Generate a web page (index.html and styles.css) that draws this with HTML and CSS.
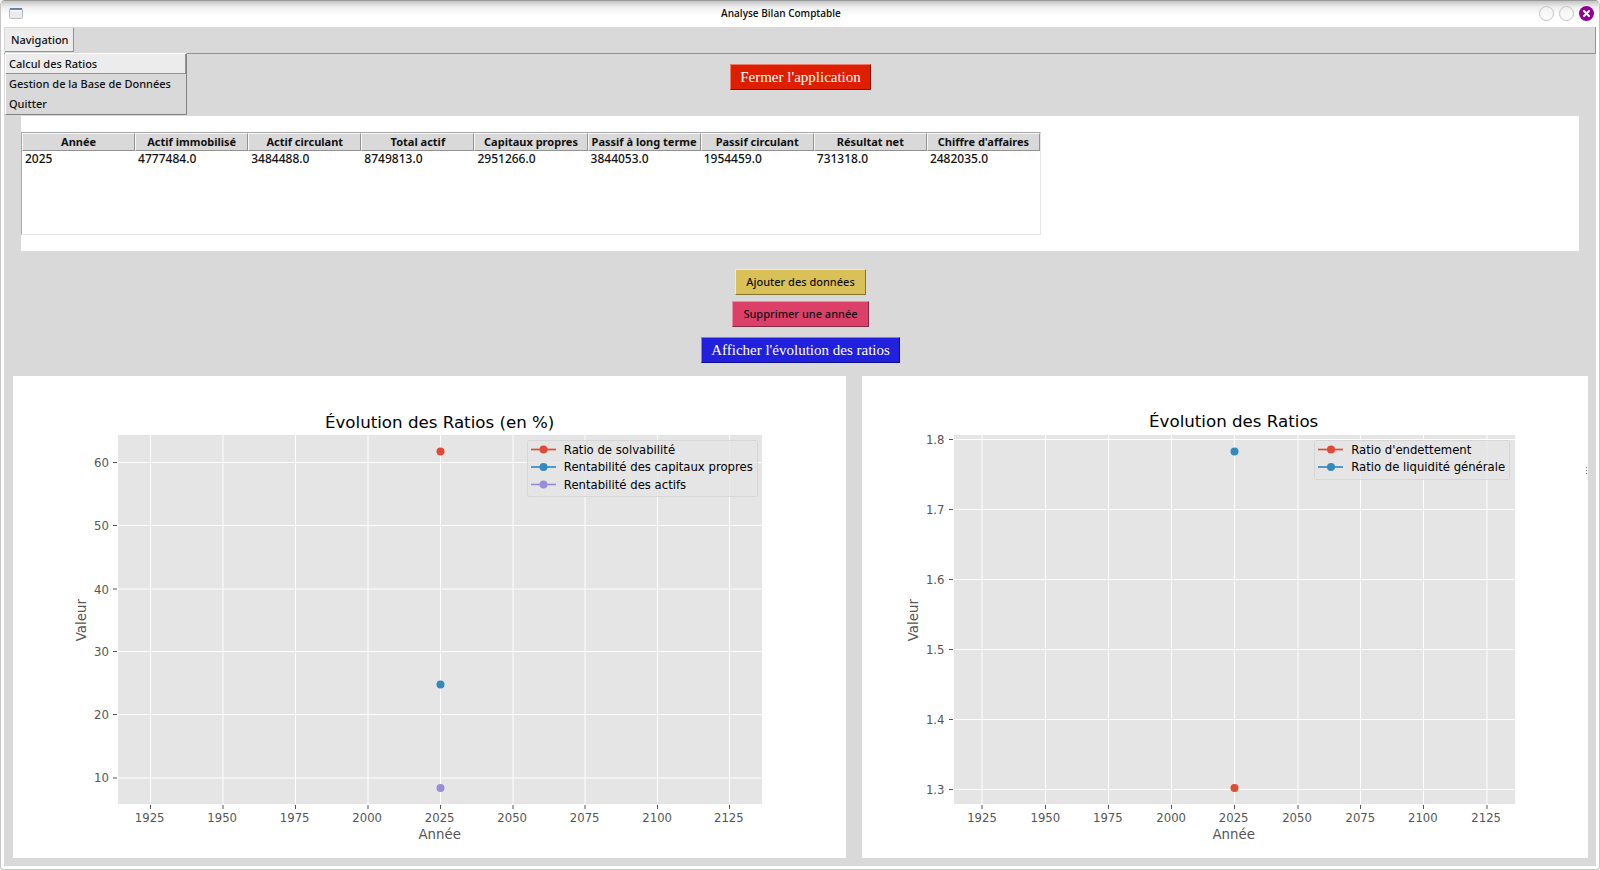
FILE: index.html
```html
<!DOCTYPE html>
<html lang="fr">
<head>
<meta charset="utf-8">
<title>Analyse Bilan Comptable</title>
<link rel="stylesheet" href="styles.css">
</head>
<body>
<div class="window">
  <header class="titlebar">
    <svg class="app-icon" viewBox="0 0 14 11" aria-hidden="true">
      <rect x=".5" y=".5" width="13" height="10" rx="1" fill="#e9ebee" stroke="#b9bdc4"/>
      <path d="M1 1h12" stroke="#5a6d90" stroke-width="1.6"/>
      <path d="M2 3h10" stroke="#fff"/>
    </svg>
    <h1 class="title">Analyse Bilan Comptable</h1>
    <div class="window-controls">
      <button class="control" type="button" aria-label="Réduire"></button>
      <button class="control" type="button" aria-label="Agrandir"></button>
      <button class="control control-close" type="button" aria-label="Fermer">
        <svg viewBox="0 0 15 15" aria-hidden="true"><path d="M5 5l5 5M10 5l-5 5" stroke="#fff" stroke-width="2" stroke-linecap="round"/></svg>
      </button>
    </div>
  </header>

  <div class="client">
    <nav class="menubar">
      <button class="menu-button" type="button" aria-expanded="true">Navigation</button>
      <div class="menu" role="menu">
        <button class="menu-item active" type="button" role="menuitem">Calcul des Ratios</button>
        <button class="menu-item" type="button" role="menuitem">Gestion de la Base de Données</button>
        <button class="menu-item" type="button" role="menuitem">Quitter</button>
      </div>
    </nav>

    <main class="content">
      <button class="btn btn-large btn-red" type="button">Fermer l'application</button>

      <section class="data-panel">
        <div class="table-frame">
          <table class="data">
            <thead>
              <tr><th>Année</th><th>Actif immobilisé</th><th>Actif circulant</th><th>Total actif</th><th>Capitaux propres</th><th>Passif à long terme</th><th>Passif circulant</th><th>Résultat net</th><th>Chiffre d'affaires</th></tr>
            </thead>
            <tbody>
              <tr><td>2025</td><td>4777484.0</td><td>3484488.0</td><td>8749813.0</td><td>2951266.0</td><td>3844053.0</td><td>1954459.0</td><td>731318.0</td><td>2482035.0</td></tr>
            </tbody>
          </table>
        </div>
      </section>

      <div class="actions">
        <button class="btn btn-yellow" type="button">Ajouter des données</button>
        <button class="btn btn-pink" type="button">Supprimer une année</button>
        <button class="btn btn-large btn-blue" type="button">Afficher l'évolution des ratios</button>
      </div>

      <section class="charts">
        <svg class="chart chart-percent" viewBox="0 0 999.6 578.4" role="img" aria-label="Évolution des Ratios (en %)">
          <rect class="plot" x="126" y="70.8" width="772.8" height="442.8"/>
          <path class="grid" d="M165 70.8v442.8M252 70.8v442.8M339 70.8v442.8M426 70.8v442.8M513 70.8v442.8M600 70.8v442.8M686.4 70.8v442.8M773.4 70.8v442.8M859.8 70.8v442.8M126 103.8h772.8M126 179.4h772.8M126 255.6h772.8M126 330.6h772.8M126 406.2h772.8M126 482.4h772.8"/>
          <path class="ticks" d="M165 514.8v4.8M252 514.8v4.8M339 514.8v4.8M426 514.8v4.8M513 514.8v4.8M600 514.8v4.8M686.4 514.8v4.8M773.4 514.8v4.8M859.8 514.8v4.8M120 103.8h4.8M120 179.4h4.8M120 255.6h4.8M120 330.6h4.8M120 406.2h4.8M120 482.4h4.8"/>
          <text class="chart-title" x="512" y="62">Évolution des Ratios (en %)</text>
          <g class="tick-y">
            <text x="115" y="109">60</text><text x="115" y="185">50</text><text x="115" y="261">40</text>
            <text x="115" y="336">30</text><text x="115" y="412">20</text><text x="115" y="487">10</text>
          </g>
          <g class="tick-x">
            <text x="164" y="535">1925</text><text x="251" y="535">1950</text><text x="338" y="535">1975</text>
            <text x="425" y="535">2000</text><text x="512" y="535">2025</text><text x="599" y="535">2050</text>
            <text x="686" y="535">2075</text><text x="773" y="535">2100</text><text x="859" y="535">2125</text>
          </g>
          <text class="axis-label" x="512" y="556">Année</text>
          <text class="axis-label" transform="translate(88 293) rotate(-90)">Valeur</text>
          <circle class="red" cx="513" cy="90.6" r="4.8"/>
          <circle class="blue" cx="513" cy="370.2" r="4.8"/>
          <circle class="purple" cx="513" cy="494.4" r="4.8"/>
          <rect class="legend-box" x="617.4" y="77.4" width="276" height="67.2" rx="2.4"/>
          <g class="red"><path d="M621.6 88.2h30"/><circle cx="636.6" cy="88.2" r="4.8"/></g>
          <g class="blue"><path d="M621.6 109.2h30"/><circle cx="636.6" cy="109.2" r="4.8"/></g>
          <g class="purple"><path d="M621.6 130.2h30"/><circle cx="636.6" cy="130.2" r="4.8"/></g>
          <g class="legend-text">
            <text x="661" y="94">Ratio de solvabilité</text>
            <text x="661" y="114">Rentabilité des capitaux propres</text>
            <text x="661" y="136">Rentabilité des actifs</text>
          </g>
        </svg>
        <svg class="chart chart-ratio" viewBox="0 0 871.2 578.4" role="img" aria-label="Évolution des Ratios">
          <rect class="plot" x="110.4" y="70.8" width="673.2" height="442.8"/>
          <path class="grid" d="M144 70.8v442.8M220.2 70.8v442.8M295.8 70.8v442.8M371.4 70.8v442.8M447 70.8v442.8M523.2 70.8v442.8M598.2 70.8v442.8M673.8 70.8v442.8M750 70.8v442.8M110.4 76.2h673.2M110.4 160.2h673.2M110.4 244.2h673.2M110.4 328.2h673.2M110.4 412.2h673.2M110.4 496.2h673.2"/>
          <path class="ticks" d="M144 514.8v4.8M220.2 514.8v4.8M295.8 514.8v4.8M371.4 514.8v4.8M447 514.8v4.8M523.2 514.8v4.8M598.2 514.8v4.8M673.8 514.8v4.8M750 514.8v4.8M104.4 76.2h4.8M104.4 160.2h4.8M104.4 244.2h4.8M104.4 328.2h4.8M104.4 412.2h4.8M104.4 496.2h4.8"/>
          <text class="chart-title" x="446" y="61">Évolution des Ratios</text>
          <g class="tick-y">
            <text x="99" y="82">1.8</text><text x="99" y="166">1.7</text><text x="99" y="250">1.6</text>
            <text x="99" y="334">1.5</text><text x="99" y="418">1.4</text><text x="99" y="502">1.3</text>
          </g>
          <g class="tick-x">
            <text x="144" y="535">1925</text><text x="220" y="535">1950</text><text x="295" y="535">1975</text>
            <text x="371" y="535">2000</text><text x="446" y="535">2025</text><text x="522" y="535">2050</text>
            <text x="598" y="535">2075</text><text x="673" y="535">2100</text><text x="749" y="535">2125</text>
          </g>
          <text class="axis-label" x="446" y="556">Année</text>
          <text class="axis-label" transform="translate(67 293) rotate(-90)">Valeur</text>
          <circle class="blue" cx="447" cy="90.6" r="4.8"/>
          <circle class="red" cx="447" cy="494.4" r="4.8"/>
          <rect class="legend-box" x="543" y="77.4" width="234" height="46.8" rx="2.4"/>
          <g class="red"><path d="M547.2 88.2h30"/><circle cx="562.8" cy="88.2" r="4.8"/></g>
          <g class="blue"><path d="M547.2 109.2h30"/><circle cx="562.8" cy="109.2" r="4.8"/></g>
          <g class="legend-text">
            <text x="587" y="94">Ratio d'endettement</text>
            <text x="587" y="114">Ratio de liquidité générale</text>
          </g>
          <path class="grip" d="M869.4 109.2v8.4"/>
        </svg>
      </section>
    </main>
  </div>
</div>
</body>
</html>
```
FILE: styles.css
```css
* { box-sizing: border-box; }

body {
  margin: 0;
  background: #f4f4f4;
  color: #111;
  font: 500 11px/18px "Noto Sans", sans-serif;
}

button {
  margin: 0;
  color: inherit;
  font: inherit;
  white-space: nowrap;
}

.window {
  display: flex;
  flex-direction: column;
  min-height: 100vh;
  padding: 0 3px 3px;
  border: 1px solid #c6c6c6;
  border-top-color: #999;
  border-radius: 5px 5px 4px 4px;
  background: #fff;
}

.titlebar {
  display: flex;
  align-items: center;
  height: 26px;
  margin: 0 -3px;
  padding: 0 5px 2px 8px;
  border-radius: 4px 4px 0 0;
  background: linear-gradient(#c4c4c4, #eee 6px, #fff 14px);
}

.app-icon { width: 14px; height: 11px; }

.title {
  flex: 1;
  margin: 0;
  font: 600 10px/18px "Open Sans", "Noto Sans", sans-serif;
  text-align: center;
}

.window-controls {
  display: flex;
  gap: 5px;
}

.control {
  width: 15px;
  height: 15px;
  padding: 0;
  border: 1px solid #c2c2c2;
  border-radius: 50%;
  background: linear-gradient(#f1f1f1, #fff);
}

.control-close {
  border: 0;
  background: #940094;
}

.control-close svg { display: block; }

.client {
  flex: 1;
  background: #d9d9d9;
}

.menubar {
  position: relative;
  display: flex;
  height: 27px;
  padding: 1px;
  border: solid #929292;
  border-width: 0 1px 1px 0;
}

.menu-button {
  padding: 0 4px 0 6px;
  border: solid;
  border-width: 0 1px 1px 0;
  border-color: #929292;
  background: #ececec;
}

.menu {
  position: absolute;
  z-index: 1;
  top: 100%;
  left: 1px;
  display: flex;
  flex-direction: column;
  width: 182px;
  border: 1px solid;
  border-color: #fff #828282 #828282 #fff;
  background: #d9d9d9;
}

.menu-item {
  height: 20px;
  padding: 0 3px;
  border: 0 solid #929292;
  background: none;
  line-height: 20px;
  text-align: left;
}

.menu-item.active {
  border-width: 0 1px 1px 0;
  background: #ececec;
}

.content {
  display: flex;
  flex-direction: column;
  align-items: center;
  padding: 10px 8px 8px 9px;
}

.btn {
  height: 26px;
  padding: 0 10px;
  border: 1px solid;
}

.btn-large {
  padding: 0 9px;
  color: #fff;
  font: 15px/18px "Liberation Serif", serif;
}

.btn-red { border-color: #f07a68 #841200 #841200 #f07a68; background: #dd1f00; }
.btn-yellow { border-color: #fff0a0 #83752f #83752f #fff0a0; background: #d9c157; }
.btn-pink { border-color: #f08aa6 #8a2743 #8a2743 #f08aa6; background: #dc4069; }
.btn-blue { margin-top: 4px; border-color: #8080f0 #101080 #101080 #8080f0; background: #2020dd; }

.data-panel {
  align-self: stretch;
  margin: 26px 9px 0 8px;
  padding: 16px 0;
  background: #fff;
}

.table-frame {
  width: 1020px;
  max-width: 100%;
  min-height: 103px;
  border: 1px solid;
  border-color: #a8a8a8 #e4e4e4 #e4e4e4 #a8a8a8;
}

.data {
  width: 100%;
  border-collapse: separate;
  border-spacing: 0;
  table-layout: fixed;
}

.data th {
  height: 18px;
  padding: 0;
  border: 1px solid;
  border-color: #f8f8f8 #929292 #929292 #f8f8f8;
  background: #d9d9d9;
  font-weight: 700;
  line-height: 16px;
  white-space: nowrap;
}

.data td {
  padding: 0 3px;
  font-size: 12px;
  line-height: 16px;
}

.actions {
  display: flex;
  flex-direction: column;
  align-items: center;
  gap: 6px;
  margin: 18px 0 13px;
}

.charts {
  display: flex;
  align-self: stretch;
  align-items: flex-start;
  gap: 16px;
}

.chart {
  display: block;
  min-width: 0;
  height: auto;
  background: #fff;
  font-family: "DejaVu Sans", sans-serif;
  font-weight: 400;
}

.chart-percent { flex: 833 1 0; }
.chart-ratio { flex: 726 1 0; }

.plot { fill: #e5e5e5; }
.grid { stroke: #fff; stroke-width: 1.2; fill: none; }
.ticks { stroke: #555; stroke-width: 1.2; fill: none; }
.chart-title { fill: #000; font-size: 20px; text-anchor: middle; }
.tick-y { fill: #555; font-size: 14px; text-anchor: end; }
.tick-x { fill: #555; font-size: 14px; text-anchor: middle; }
.axis-label { fill: #555; font-size: 16px; text-anchor: middle; }
.legend-box { fill: #e5e5e5; fill-opacity: .8; stroke: #d6d6d6; stroke-width: 1.2; }
.legend-text { fill: #000; font-size: 14px; }
.red { fill: #e24a33; stroke: #e24a33; }
.blue { fill: #348abd; stroke: #348abd; }
.purple { fill: #988ed5; stroke: #988ed5; }
.chart circle { stroke-width: 0; }
.chart g path { stroke-width: 2; }
.grip { stroke: #777; stroke-width: 1.2; stroke-dasharray: 1.2 2.4; }
```
